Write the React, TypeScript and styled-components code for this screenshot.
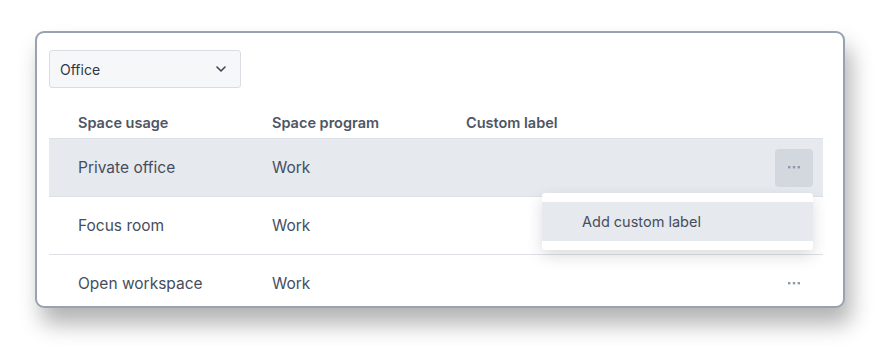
import styled, { createGlobalStyle } from "styled-components";

const Global = createGlobalStyle`
  html, body {
    margin: 0;
    background: #ffffff;
    font-family: Inter, "Noto Sans", sans-serif;
  }
`;

const rows = [
  { usage: "Private office", program: "Work", active: true },
  { usage: "Focus room", program: "Work", active: false },
  { usage: "Open workspace", program: "Work", active: false },
];

const Dots = () => (
  <svg width="12" height="3" viewBox="0 0 12 3">
    <rect x="0" y="0" width="2.4" height="2.4" fill="#8f99a7" />
    <rect x="4.8" y="0" width="2.4" height="2.4" fill="#8f99a7" />
    <rect x="9.6" y="0" width="2.4" height="2.4" fill="#8f99a7" />
  </svg>
);

export default function App() {
  return (
    <Page>
      <Global />
      <Card>
        <Select>
          <span>Office</span>
          <svg width="10" height="6" viewBox="0 0 10 6">
            <path d="M1 1l4 4 4-4" fill="none" stroke="#3d4452" strokeWidth="1.6" strokeLinecap="round" strokeLinejoin="round" />
          </svg>
        </Select>
        <Table>
          <HeadRow>
            <Cell $head>Space usage</Cell>
            <Cell $head>Space program</Cell>
            <Cell $head>Custom label</Cell>
            <Cell />
          </HeadRow>
          {rows.map((r) => (
            <Row key={r.usage} $active={r.active}>
              <Cell>{r.usage}</Cell>
              <Cell>{r.program}</Cell>
              <Cell />
              <Actions>
                {r.usage !== "Focus room" && (
                  <MoreButton $active={r.active}>
                    <Dots />
                  </MoreButton>
                )}
                {r.active && (
                  <Menu>
                    <MenuItem>Add custom label</MenuItem>
                  </Menu>
                )}
              </Actions>
            </Row>
          ))}
        </Table>
      </Card>
    </Page>
  );
}

const Page = styled.div`
  box-sizing: border-box;
  min-height: 352px;
  padding: 31px 0 0 35px;
`;

const Card = styled.div`
  box-sizing: border-box;
  width: 810px;
  height: 277px;
  border: 2px solid #98a2b0;
  border-radius: 9px;
  background: #fff;
  padding: 17px 20px 0 12px;
  box-shadow: 6px 16px 22px rgba(0, 0, 0, 0.3);
  overflow: hidden;
`;

const Select = styled.div`
  box-sizing: border-box;
  width: 192px;
  height: 38px;
  border: 1px solid #d9dde3;
  border-radius: 3px;
  background: #f6f7f9;
  display: flex;
  align-items: center;
  justify-content: space-between;
  padding: 0 14px 0 10px;
  font-size: 14px;
  color: #2f3643;
`;

const Table = styled.div`
  margin-top: 18px;
`;

const HeadRow = styled.div`
  display: grid;
  grid-template-columns: 194px 194px 194px 1fr;
  height: 32px;
  align-items: center;
  border-bottom: 1px solid #dde1e6;
`;

const Row = styled.div<{ $active: boolean }>`
  display: grid;
  grid-template-columns: 194px 194px 194px 1fr;
  height: 57px;
  align-items: center;
  border-bottom: 1px solid #dde1e6;
  background: ${(p) => (p.$active ? "#e6e9ee" : "transparent")};
`;

const Cell = styled.div<{ $head?: boolean }>`
  padding-left: 29px;
  font-size: ${(p) => (p.$head ? "14.5px" : "15.5px")};
  font-weight: ${(p) => (p.$head ? 600 : 400)};
  color: ${(p) => (p.$head ? "#4e5664" : "#454e5c")};
`;

const Actions = styled.div`
  position: relative;
  display: flex;
  justify-content: flex-end;
  padding-right: 10px;
`;

const MoreButton = styled.div<{ $active: boolean }>`
  width: 38px;
  height: 38px;
  border-radius: 4px;
  background: ${(p) => (p.$active ? "#d3d8df" : "transparent")};
  display: flex;
  align-items: center;
  justify-content: center;
`;

const Menu = styled.div`
  position: absolute;
  top: 44px;
  right: 10px;
  width: 271px;
  padding: 9px 0;
  background: #fff;
  border-radius: 3px;
  box-shadow: 0 6px 16px rgba(0, 0, 0, 0.14);
  z-index: 2;
`;

const MenuItem = styled.div`
  height: 39px;
  background: #e6e9ee;
  display: flex;
  align-items: center;
  padding-left: 40px;
  font-size: 14.5px;
  color: #454e5c;
`;
